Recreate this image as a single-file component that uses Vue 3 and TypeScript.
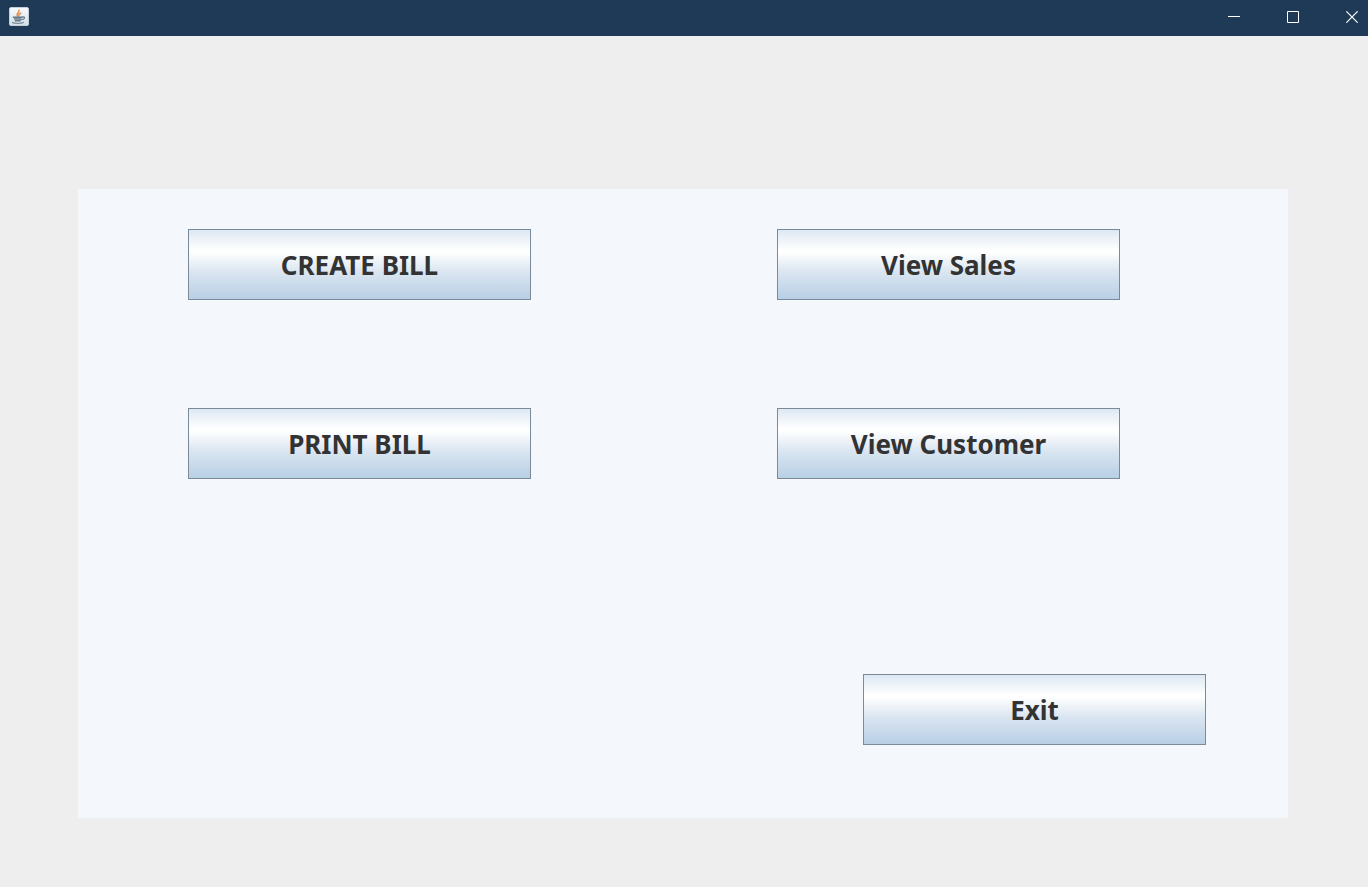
<script setup lang="ts">
interface Action {
  id: string
  label: string
}

const actions: Action[] = [
  { id: 'create-bill', label: 'CREATE BILL' },
  { id: 'view-sales', label: 'View Sales' },
  { id: 'print-bill', label: 'PRINT BILL' },
  { id: 'view-customer', label: 'View Customer' },
]
</script>

<template>
  <div class="window">
    <header class="titlebar">
      <svg class="app-icon" viewBox="0 0 20 20" aria-hidden="true">
        <defs>
          <linearGradient id="tile" x1="0" y1="0" x2="0" y2="1">
            <stop offset="0" stop-color="#f8fbfd" />
            <stop offset="1" stop-color="#d3dfe7" />
          </linearGradient>
        </defs>
        <rect x="0.5" y="1.5" width="19" height="18" rx="1.5" fill="url(#tile)" stroke="#c3d0da" />
        <path d="M9.2 10.6C5.8 8.2 11.2 6.8 9.9 3.6M10.2 10.6C9 8.8 10.4 8 12.2 6.8" fill="none" stroke="#e39a63" stroke-width="1.7" />
        <path d="M3.8 11.2h9.8M5 13h7.6M5.8 14.8h6" fill="none" stroke="#647988" stroke-width="1.4" />
        <path d="M13.2 10.9c3.6-.6 2.8 2.4-.7 3" fill="none" stroke="#647988" stroke-width="1.2" />
        <path d="M3 16.4c2.8 1.5 9.4 1.4 12-.2" fill="none" stroke="#7a8e9b" stroke-width="1.3" />
      </svg>
      <div class="controls">
        <button type="button" class="control" aria-label="Minimize">
          <svg viewBox="0 0 12 12"><path d="M0 5.5h12" /></svg>
        </button>
        <button type="button" class="control" aria-label="Maximize">
          <svg viewBox="0 0 12 12"><path d="M.5 .5h11v11H.5z" /></svg>
        </button>
        <button type="button" class="control" aria-label="Close">
          <svg viewBox="0 0 12 12"><path d="M.3 .3l11.4 11.4M11.7 .3L.3 11.7" stroke-width="1.2" /></svg>
        </button>
      </div>
    </header>
    <main class="panel">
      <div class="actions">
        <button v-for="action in actions" :key="action.id" type="button" class="metal">{{ action.label }}</button>
      </div>
      <div class="exit-row">
        <button type="button" class="metal exit">Exit</button>
      </div>
    </main>
  </div>
</template>

<style>
body {
  margin: 0;
  background: #eeeeee;
}
</style>

<style scoped>
.window {
  box-sizing: border-box;
  min-height: 100vh;
  background: #eeeeee;
  font-family: "Noto Sans", "Open Sans", sans-serif;
}

.titlebar {
  display: flex;
  align-items: flex-start;
  justify-content: space-between;
  height: 36px;
  padding-left: 9px;
  background: #1f3a57;
}

.app-icon {
  width: 20px;
  height: 20px;
  margin-top: 6px;
}

.controls {
  display: flex;
  gap: 27px;
}

.control {
  display: flex;
  align-items: center;
  justify-content: center;
  width: 32px;
  height: 34px;
  padding: 0;
  border: 0;
  background: transparent;
}

.control svg {
  width: 12px;
  height: 12px;
  fill: none;
  stroke: #ffffff;
}

.panel {
  margin: 153px 80px 0 78px;
  padding: 40px 0 73px;
  background: #f4f7fc;
}

.actions {
  display: grid;
  grid-template-columns: 1fr 1fr;
  gap: 108px 246px;
  padding: 0 168px 0 110px;
}

.metal {
  height: 71px;
  padding: 0;
  border: 1px solid #7a8a99;
  background: linear-gradient(#dde8f3 0%, #ffffff 29%, #ffffff 32%, #dbe6f1 60%, #b8cfe5 100%);
  color: #333333;
  font-family: inherit;
  font-size: 26px;
  font-weight: 700;
  line-height: 36px;
}

.exit-row {
  display: flex;
  justify-content: flex-end;
  margin-top: 195px;
  padding-right: 82px;
}

.exit {
  width: 343px;
}
</style>
